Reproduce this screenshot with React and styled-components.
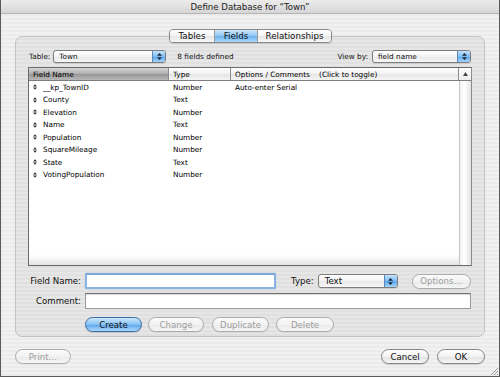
import React from 'react';
import styled, { createGlobalStyle } from 'styled-components';

const GlobalStyle = createGlobalStyle`
    body {
        margin: 0;
        font-family: "DejaVu Sans", "Liberation Sans", sans-serif;
        color: #111;
    }
`;

const Window = styled.div`
    position: relative;
    width: 500px;
    height: 377px;
    box-sizing: border-box;
    border: 1px solid #5a5a5a;
    border-top: none;
    display: flex;
    flex-direction: column;
    background: repeating-linear-gradient(to bottom, #f1f1f1 0 2px, #ebebeb 2px 4px);
    overflow: hidden;
`;

const TitleBar = styled.div`
    height: 14px;
    flex: none;
    display: flex;
    align-items: center;
    justify-content: center;
    font-size: 8.6px;
    color: #222;
    background: linear-gradient(to bottom, #ececec, #d6d6d6);
    border-bottom: 1px solid #b4b4b4;
    box-sizing: border-box;
`;

const Tabs = styled.div`
    position: relative;
    z-index: 2;
    align-self: center;
    margin: 15px 0 -7px 1px;
    display: flex;
    height: 14px;
    border: 1px solid #878787;
    border-radius: 4px;
    overflow: hidden;
    box-sizing: border-box;
    box-shadow: 0 1px 1px rgba(0, 0, 0, 0.12);
`;

const Tab = styled.div`
    width: ${p => p.$w}px;
    display: flex;
    align-items: center;
    justify-content: center;
    font-size: 8.7px;
    color: #111;
    box-sizing: border-box;
    border-left: ${p => (p.$first ? 'none' : '1px solid #9a9a9a')};
    background: ${p =>
        p.$active
            ? 'linear-gradient(to bottom, #cfe7fb, #8ec6f4 50%, #6cb2ee 52%, #a9d8fb)'
            : 'linear-gradient(to bottom, #ffffff, #f3f3f3 50%, #e6e6e6 52%, #f7f7f7)'};
`;

const GroupBox = styled.div`
    margin: 0 14px;
    border: 1px solid #c2c2c2;
    border-radius: 7px;
    background: rgba(0, 0, 0, 0.045);
    padding: 13px 12px 4px 12px;
    display: flex;
    flex-direction: column;
`;

const TopRow = styled.div`
    display: flex;
    align-items: center;
    height: 13px;
    font-size: 7.3px;
`;

const Label = styled.span`
    font-size: ${p => (p.$big ? '8.6px' : '7.3px')};
    margin-left: ${p => p.$ml || 0}px;
    margin-right: ${p => p.$mr || 0}px;
    white-space: nowrap;
`;

const Spacer = styled.div`
    flex: 1;
`;

const PopupBox = styled.div`
    width: ${p => p.$w}px;
    height: ${p => p.$h || 13}px;
    margin-right: ${p => p.$mr || 0}px;
    box-sizing: border-box;
    border: 1px solid #7c7c7c;
    border-radius: 3px;
    display: flex;
    align-items: stretch;
    overflow: hidden;
    background: linear-gradient(to bottom, #ffffff, #f3f3f3 50%, #e8e8e8 52%, #f7f7f7);
    box-shadow: 0 1px 1px rgba(0, 0, 0, 0.1);
`;

const PopupText = styled.div`
    flex: 1;
    display: flex;
    align-items: center;
    padding-left: ${p => p.$pl || 5}px;
    font-size: ${p => (p.$big ? '8.6px' : '7.3px')};
`;

const PopupCap = styled.div`
    width: 12px;
    display: flex;
    align-items: center;
    justify-content: center;
    border-left: 1px solid #5f86b8;
    background: linear-gradient(to bottom, #c4e3fc, #7cbdf3 50%, #5aa6ec 52%, #a5d4fa);
`;

const UpDown = ({ w = 5, h = 7, color = '#1d2a3a' }) => (
    <svg width={w} height={h} viewBox="0 0 5 7">
        <path d="M2.5 0 L5 2.8 L0 2.8 Z M2.5 7 L5 4.2 L0 4.2 Z" fill={color} />
    </svg>
);

const Popup = ({ w, h, big, pl, mr, children }) => (
    <PopupBox $w={w} $h={h} $mr={mr}>
        <PopupText $big={big} $pl={pl}>{children}</PopupText>
        <PopupCap>
            <UpDown />
        </PopupCap>
    </PopupBox>
);

const List = styled.div`
    margin-top: 4px;
    height: 199px;
    box-sizing: border-box;
    border: 1px solid #6a6a6a;
    border-right-color: #8a8a8a;
    background: #fff;
    display: flex;
    flex-direction: column;
    font-size: 7.3px;
    color: #000;
`;

const HeaderRow = styled.div`
    display: flex;
    height: 13px;
    flex: none;
    border-bottom: 1px solid #7d7d7d;
    box-sizing: border-box;
`;

const HeadCell = styled.div`
    width: ${p => (p.$w ? `${p.$w}px` : 'auto')};
    flex: ${p => (p.$w ? 'none' : 1)};
    display: flex;
    align-items: center;
    padding-left: 4px;
    box-sizing: border-box;
    white-space: pre;
    border-right: 1px solid #8c8c8c;
    background: ${p =>
        p.$sorted
            ? 'linear-gradient(to bottom, #d6d6d6, #acacac 50%, #969696 52%, #b8b8b8)'
            : 'linear-gradient(to bottom, #ffffff, #f2f2f2 50%, #e6e6e6 52%, #f4f4f4)'};
`;

const ArrowCell = styled.div`
    width: 12px;
    flex: none;
    display: flex;
    align-items: center;
    justify-content: center;
    background: linear-gradient(to bottom, #ffffff, #ececec);
`;

const ListBody = styled.div`
    flex: 1;
    display: flex;
`;

const Rows = styled.div`
    flex: 1;
    display: flex;
    flex-direction: column;
    border-bottom: 1px solid #e4e4e4;
    box-shadow: inset 0 -8px 6px -4px #e6e6e6;
`;

const Row = styled.div`
    display: flex;
    height: 12.5px;
    align-items: center;
`;

const Cell = styled.div`
    width: ${p => (p.$w ? `${p.$w}px` : 'auto')};
    flex: ${p => (p.$w ? 'none' : 1)};
    display: flex;
    align-items: center;
    padding-left: ${p => p.$pl || 4}px;
    box-sizing: border-box;
    white-space: nowrap;
`;

const Handle = styled.span`
    display: inline-flex;
    width: 10px;
`;

const ScrollTrack = styled.div`
    width: 11px;
    flex: none;
    border-left: 1px solid #c8c8c8;
    background: linear-gradient(to right, #f2f2f2, #ffffff 40%, #e4e4e4);
`;

const FormRow = styled.div`
    display: flex;
    align-items: center;
    margin-top: ${p => p.$mt}px;
`;

const FormLabel = styled.div`
    width: 53px;
    margin-right: 4px;
    text-align: right;
    font-size: 8.6px;
    white-space: nowrap;
`;

const TextInput = styled.div`
    width: ${p => p.$w}px;
    height: 16px;
    box-sizing: border-box;
    background: #fff;
    border: ${p => (p.$focus ? '2px solid #88b3e2' : '1px solid #9a9a9a')};
    border-top-color: ${p => (p.$focus ? '#7aa6d8' : '#6e6e6e')};
    border-radius: ${p => (p.$focus ? '2px' : '0')};
    box-shadow: ${p => (p.$focus ? '0 0 1px #5a8fd0' : 'inset 0 1px 1px rgba(0,0,0,0.15)')};
`;

const Button = styled.div`
    width: ${p => p.$w}px;
    height: 15px;
    margin-left: ${p => p.$ml || 0}px;
    box-sizing: border-box;
    display: flex;
    align-items: center;
    justify-content: center;
    border-radius: 8px;
    font-size: 8.6px;
    color: ${p => (p.$disabled ? '#9c9c9c' : '#111')};
    border: 1px solid ${p => (p.$primary ? '#3b6aa4' : p.$disabled ? '#ababab' : '#858585')};
    background: ${p =>
        p.$primary
            ? 'linear-gradient(to bottom, #cde8fc, #86c2f4 50%, #5aa5ec 52%, #aedafc)'
            : p.$disabled
            ? 'linear-gradient(to bottom, #fbfbfb, #f2f2f2 50%, #eaeaea 52%, #f6f6f6)'
            : 'linear-gradient(to bottom, #ffffff, #f2f2f2 50%, #e3e3e3 52%, #f7f7f7)'};
    box-shadow: 0 1px 1px rgba(0, 0, 0, ${p => (p.$disabled ? 0.05 : 0.15)});
`;

const ButtonRow = styled.div`
    display: flex;
    margin-top: 8px;
    padding-left: 57px;
`;

const Footer = styled.div`
    display: flex;
    align-items: center;
    margin: 12px 14px 0 14px;
`;

const Grip = styled.svg`
    position: absolute;
    right: 0;
    bottom: 0;
`;

const fields = [
    ['__kp_TownID', 'Number', 'Auto-enter Serial'],
    ['County', 'Text', ''],
    ['Elevation', 'Number', ''],
    ['Name', 'Text', ''],
    ['Population', 'Number', ''],
    ['SquareMileage', 'Number', ''],
    ['State', 'Text', ''],
    ['VotingPopulation', 'Number', ''],
];

const App = () => {
    return (
        <Window>
            <GlobalStyle />
            <TitleBar>Define Database for “Town”</TitleBar>
            <Tabs>
                <Tab $w={44} $first>Tables</Tab>
                <Tab $w={43} $active>Fields</Tab>
                <Tab $w={74}>Relationships</Tab>
            </Tabs>
            <GroupBox>
                <TopRow>
                    <Label $ml={1} $mr={3}>Table:</Label>
                    <Popup w={113}>Town</Popup>
                    <Label $ml={11}>8 fields defined</Label>
                    <Spacer />
                    <Label $mr={4}>View by:</Label>
                    <Popup w={99} mr={1}>field name</Popup>
                </TopRow>
                <List>
                    <HeaderRow>
                        <HeadCell $w={140} $sorted>Field Name</HeadCell>
                        <HeadCell $w={62}>Type</HeadCell>
                        <HeadCell>{'Options / Comments    (Click to toggle)'}</HeadCell>
                        <ArrowCell>
                            <svg width="5" height="4" viewBox="0 0 5 4">
                                <path d="M2.5 0 L5 4 L0 4 Z" fill="#444" />
                            </svg>
                        </ArrowCell>
                    </HeaderRow>
                    <ListBody>
                        <Rows>
                            {fields.map(([name, type, opt]) => (
                                <Row key={name}>
                                    <Cell $w={140} $pl={4}>
                                        <Handle>
                                            <UpDown w={4} h={6} color="#333" />
                                        </Handle>
                                        {name}
                                    </Cell>
                                    <Cell $w={62}>{type}</Cell>
                                    <Cell>{opt}</Cell>
                                </Row>
                            ))}
                        </Rows>
                        <ScrollTrack />
                    </ListBody>
                </List>
                <FormRow $mt={7}>
                    <FormLabel>Field Name:</FormLabel>
                    <TextInput $w={191} $focus />
                    <Label $big $ml={15} $mr={4}>Type:</Label>
                    <Popup w={80} h={14} big pl={6}>Text</Popup>
                    <Button $w={59} $ml={14} $disabled>Options…</Button>
                </FormRow>
                <FormRow $mt={4}>
                    <FormLabel>Comment:</FormLabel>
                    <TextInput $w={386} />
                </FormRow>
                <ButtonRow>
                    <Button $w={57} $primary>Create</Button>
                    <Button $w={56} $ml={6} $disabled>Change</Button>
                    <Button $w={57} $ml={8} $disabled>Duplicate</Button>
                    <Button $w={58} $ml={7} $disabled>Delete</Button>
                </ButtonRow>
            </GroupBox>
            <Footer>
                <Button $w={56} $disabled>Print…</Button>
                <Spacer />
                <Button $w={48}>Cancel</Button>
                <Button $w={48} $ml={8}>OK</Button>
            </Footer>
            <Grip width="10" height="10" viewBox="0 0 10 10">
                <path d="M9 2 L2 9 M9 5 L5 9 M9 8 L8 9" stroke="#9a9a9a" strokeWidth="1" />
            </Grip>
        </Window>
    );
};

export default App;
